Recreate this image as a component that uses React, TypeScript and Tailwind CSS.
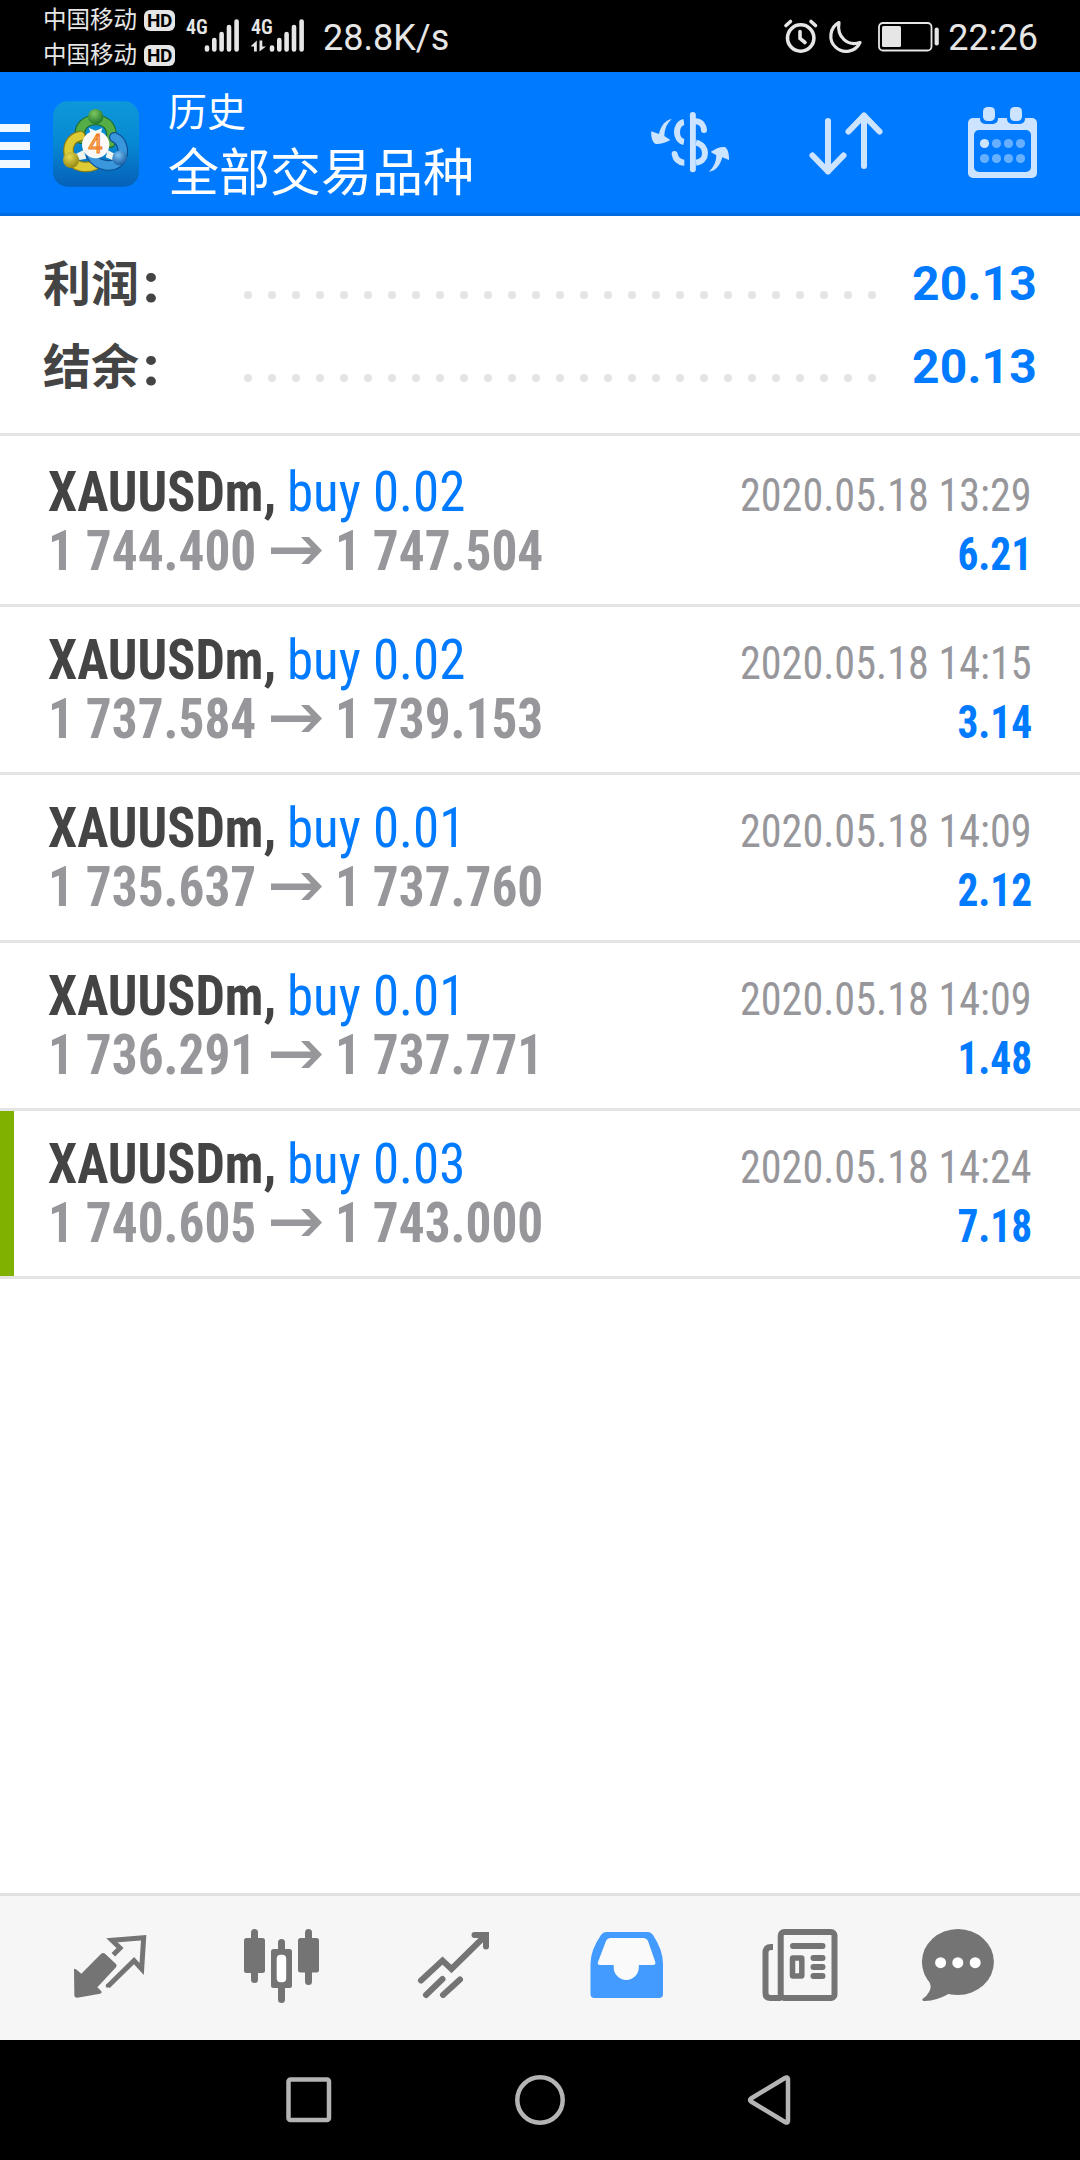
import React from 'react';

interface Deal {
  symbol: string;
  side: string;
  open: string;
  close: string;
  time: string;
  profit: string;
  marked?: boolean;
}

const deals: Deal[] = [
  { symbol: 'XAUUSDm,', side: 'buy 0.02', open: '1 744.400', close: '1 747.504', time: '2020.05.18 13:29', profit: '6.21' },
  { symbol: 'XAUUSDm,', side: 'buy 0.02', open: '1 737.584', close: '1 739.153', time: '2020.05.18 14:15', profit: '3.14' },
  { symbol: 'XAUUSDm,', side: 'buy 0.01', open: '1 735.637', close: '1 737.760', time: '2020.05.18 14:09', profit: '2.12' },
  { symbol: 'XAUUSDm,', side: 'buy 0.01', open: '1 736.291', close: '1 737.771', time: '2020.05.18 14:09', profit: '1.48' },
  { symbol: 'XAUUSDm,', side: 'buy 0.03', open: '1 740.605', close: '1 743.000', time: '2020.05.18 14:24', profit: '7.18', marked: true },
];

const Carrier = () => (
  <div className="flex items-center h-[35px]">
    <span className="w-[101px] text-[23.5px] leading-[35px] whitespace-nowrap">中国移动</span>
    <span className="w-[31px] h-[21px] rounded-[6px] bg-[#e6e6e6] text-black text-[19px] leading-[21px] tracking-[-0.5px] font-bold text-center font-['Roboto',sans-serif]">HD</span>
  </div>
);

const Signal = ({ data }: { data?: boolean }) => (
  <div className="relative w-[65px] h-[72px]">
    <span className="absolute left-0 top-[17px] text-[20px] leading-[20px] font-semibold font-['Roboto_Condensed',sans-serif]">4G</span>
    <svg className="w-[65px] h-[72px]" viewBox="0 0 65 72" stroke="#e6e6e6" strokeWidth="4.6" strokeLinecap="round" fill="none">
      <path d="M21 47.5V49.5M28.3 40V49.5M35.6 34V49.5M43 27V49.5M50.6 21.5V49.5" />
      {data && (
        <path d="M5.8 40.5V51.5H3V46.5H-0.5ZM8.5 40.5V51.5L15 46.5H11.3V40.5Z" fill="#e6e6e6" stroke="none" />
      )}
    </svg>
  </div>
);

const StatusBar = () => (
  <div className="flex h-[72px] bg-black text-[#e6e6e6] pl-[43px] pr-[42px] font-['Roboto','Noto_Sans_CJK_SC',sans-serif]">
    <div className="flex flex-col pt-[3px] w-[143px]">
      <Carrier />
      <Carrier />
    </div>
    <Signal />
    <Signal data />
    <span className="ml-[7px] text-[36px] leading-[76px]">28.8K/s</span>
    <svg className="ml-auto w-[168px] h-[72px]" viewBox="780 0 168 72" fill="none" stroke="#e6e6e6" strokeLinecap="round">
      {/* alarm */}
      <circle cx="800.7" cy="38" r="13.2" strokeWidth="3.6" />
      <path d="M800 31.5V38.5L805 42.5" strokeWidth="3.6" />
      <path d="M786 25.5L790.5 21.5M815.5 25.5L811 21.5" strokeWidth="3.6" />
      {/* do not disturb */}
      <path d="M839 22.5A15.3 15.3 0 1 0 860 42.5C848 46.5 836.5 37.5 839 22.5Z" strokeWidth="3.2" strokeLinejoin="round" />
      {/* battery */}
      <rect x="879" y="23" width="52.5" height="27.5" rx="4" strokeWidth="1.8" />
      <rect x="882" y="26" width="19" height="21" rx="1.5" fill="#e6e6e6" stroke="none" />
      <path d="M936.7 29.5V43.5" strokeWidth="4.2" />
    </svg>
    <span className="text-[36px] leading-[76px]">22:26</span>
  </div>
);

const AppLogo = () => (
  <svg className="ml-[23px] mt-[3px] w-[86px] h-[86px]" viewBox="24 35 258 258">
    <defs>
      <linearGradient id="tile" x1="0" y1="0" x2="0" y2="1">
        <stop offset="0" stopColor="#0d98da" />
        <stop offset="0.5" stopColor="#0788d2" />
        <stop offset="1" stopColor="#0560b8" />
      </linearGradient>
      <radialGradient id="green" cx="0.4" cy="0.3" r="0.8">
        <stop offset="0" stopColor="#7cc860" />
        <stop offset="1" stopColor="#136a22" />
      </radialGradient>
      <radialGradient id="yellow" cx="0.4" cy="0.3" r="0.8">
        <stop offset="0" stopColor="#e6da50" />
        <stop offset="1" stopColor="#8a7d0c" />
      </radialGradient>
      <radialGradient id="blue" cx="0.4" cy="0.3" r="0.8">
        <stop offset="0" stopColor="#7cc4f4" />
        <stop offset="1" stopColor="#0a4f9a" />
      </radialGradient>
    </defs>
    <rect x="24" y="36" width="258" height="256" rx="44" fill="url(#tile)" />
    <g fill="none" strokeLinecap="round">
      <path d="M108 148C96 112 122 92 152 92C190 92 208 122 196 160" stroke="#1c6a2c" strokeWidth="32" />
      <path d="M108 148C96 112 122 92 152 92C190 92 208 122 196 160" stroke="#55ad45" strokeWidth="25" />
      <path d="M106 140C76 146 64 172 74 206C86 232 122 238 148 228" stroke="#8a7d12" strokeWidth="32" />
      <path d="M106 140C76 146 64 172 74 206C86 232 122 238 148 228" stroke="#dccb34" strokeWidth="25" />
      <path d="M208 144C234 156 240 188 226 212C206 238 158 232 140 200" stroke="#0c4f94" strokeWidth="32" />
      <path d="M208 144C234 156 240 188 226 212C206 238 158 232 140 200" stroke="#3b97dc" strokeWidth="25" />
    </g>
    <path d="M132 116L152 124L172 116L166 136H138ZM92 194L116 182L124 208L104 212ZM210 194L188 182L182 204L202 212Z" fill="#eef4ee" />
    <circle cx="152" cy="82" r="23" fill="url(#green)" />
    <circle cx="78" cy="212" r="24" fill="url(#yellow)" />
    <circle cx="224" cy="206" r="22" fill="url(#blue)" />
    <circle cx="152" cy="166" r="41" fill="#fbfaf7" />
    <text x="151" y="192" textAnchor="middle" fontSize="76" fontFamily="Roboto, sans-serif" fontWeight="400" fill="#fbb36a" stroke="#ee7b1d" strokeWidth="3">4</text>
  </svg>
);

const Header = () => (
  <header className="flex items-center h-[144px] bg-[#007aff] border-b-[3px] border-[#006be0]">
    <div className="flex flex-col gap-[10px] w-[30px] pt-[7px]">
      <span className="h-2 bg-[#f2f8ff]" />
      <span className="h-2 bg-[#f2f8ff]" />
      <span className="h-2 bg-[#f2f8ff]" />
    </div>
    <AppLogo />
    <div className="flex flex-col ml-[29px] pb-[6px] text-white whitespace-nowrap font-['Noto_Sans_CJK_SC',sans-serif]">
      <span className="text-[39px] leading-[58px]">历史</span>
      <span className="text-[51px] leading-[62px]">全部交易品种</span>
    </div>
    <div className="flex ml-auto h-[141px]">
      {/* currency exchange */}
      <svg className="w-[156px] h-[141px]" viewBox="-84 -84 468 423" fill="#cce4ff">
        <g fill="none" stroke="#cce4ff" strokeWidth="18">
          <path d="M132 66C104 72 104 120 132 126" />
          <path d="M168 64C184 66 192 78 192 90" strokeLinecap="round" />
          <path d="M168 128C204 136 204 184 168 188" />
          <path d="M104 162C106 176 116 186 132 188" strokeLinecap="round" />
          <path d="M158.5 45V208" strokeLinecap="round" />
        </g>
        <rect x="133" y="50" width="16" height="160" fill="#007aff" />
        <path d="M95 57C78 60 62 76 57 102L34 94C32 112 38 128 47 132C60 133 76 128 91 120L73 108C74 84 82 70 95 57Z" />
        <path d="M206 215C226 214 240 198 247 172L267 180C268 160 262 144 254 141C240 140 226 146 212 156L229 166C228 188 220 204 206 215Z" />
      </svg>
      {/* sort */}
      <svg className="w-[156px] h-[141px]" viewBox="768 72 156 141" fill="none" stroke="#cce4ff" strokeWidth="6" strokeLinecap="round" strokeLinejoin="round">
        <path d="M828 121V171.5M812.5 155.5L828 171.5L843.5 155.5" />
        <path d="M864 166V115.5M848.5 131.5L864 115.5L879.5 131.5" />
      </svg>
      {/* calendar */}
      <svg className="w-[156px] h-[141px]" viewBox="924 72 156 141" fill="#cce4ff">
        <rect x="968" y="118" width="69" height="60" rx="5" />
        <rect x="974" y="130" width="57" height="42" rx="5" fill="#007aff" />
        <path d="M980 117H998V119A5 5 0 0 1 993 124H985A5 5 0 0 1 980 119ZM1007 117H1025V119A5 5 0 0 1 1020 124H1012A5 5 0 0 1 1007 119Z" fill="#007aff" />
        <rect x="983" y="107" width="12" height="14" rx="4.5" />
        <rect x="1010" y="107" width="12" height="14" rx="4.5" />
        <circle cx="984.5" cy="143.5" r="4.6" />
        <g fill="#66b0ff">
          <circle cx="996.5" cy="143.5" r="4.6" />
          <circle cx="1008.5" cy="143.5" r="4.6" />
          <circle cx="1020.5" cy="143.5" r="4.6" />
          <circle cx="984.5" cy="158.5" r="4.6" />
          <circle cx="996.5" cy="158.5" r="4.6" />
          <circle cx="1008.5" cy="158.5" r="4.6" />
          <circle cx="1020.5" cy="158.5" r="4.6" />
        </g>
      </svg>
    </div>
  </header>
);

const SummaryRow = ({ label, value }: { label: string; value: string }) => (
  <div className="flex items-center h-[83px] pl-[43px] pr-[43px] text-[48px] leading-[83px] font-bold">
    <div className="flex w-[201px] text-[#444] pb-[4px]">
      <span className="font-['Noto_Sans_CJK_SC',sans-serif]">{label}</span>
      <span className="ml-[4px] pt-[3px] text-[54px] font-black font-['Roboto',sans-serif]">:</span>
    </div>
    <div className="flex justify-between w-[632px] pt-[22px]">
      {Array.from({ length: 27 }, (_, i) => (
        <span key={i} className="size-2 rounded-full bg-[#e4e4e4]" />
      ))}
    </div>
    <span className="ml-auto text-[#007aff] tracking-[0.2px] font-['Roboto',sans-serif]">{value}</span>
  </div>
);

const DealRow = ({ deal }: { deal: Deal }) => (
  <div className="flex h-[168px] border-b-[3px] border-[#e4e4e4]">
    <span className={`w-[14px] shrink-0 ${deal.marked ? 'bg-[#80b100]' : ''}`} />
    <div className="flex flex-col flex-1 pt-6 pl-[34px] pr-[48px] leading-[59px] whitespace-nowrap font-['Roboto_Condensed',sans-serif]">
      <div className="flex items-baseline h-[59px] text-[55px]">
        <span className="w-[239px] font-bold text-[#444] origin-left scale-x-[0.947]">{deal.symbol}</span>
        <span className="text-[#007aff] origin-left scale-x-[0.963]">{deal.side}</span>
        <span className="ml-auto text-[45.5px] text-[#97979b] origin-right scale-x-[0.927]">{deal.time}</span>
      </div>
      <div className="flex items-baseline h-[59px] text-[55px] font-bold text-[#97979b]">
        <span className="w-[223px] origin-left scale-x-[0.933]">{deal.open}</span>
        <svg className="w-[51px] h-[28px] self-center translate-y-[-1px]" viewBox="0 0 51 28">
          <path d="M0 10.5H40L30 0H38L51 13.5L38 27H30L40 17H0Z" fill="#97979b" />
        </svg>
        <span className="ml-[13px] origin-left scale-x-[0.933]">{deal.close}</span>
        <span className="ml-auto text-[45.5px] text-[#007aff] origin-right scale-x-[0.91]">{deal.profit}</span>
      </div>
    </div>
  </div>
);

const TabBar = () => (
  <nav className="flex h-[147px] bg-[#f6f6f6] border-t-[3px] border-[#e1e1e1] pl-6 text-[#747474]">
    {/* quotes */}
    <svg className="w-[172px] h-[144px] shrink-0" viewBox="-108 -42 516 432" fill="currentColor">
      <path d="M42 180Q42 174 48 178L64 191L122 133Q129 126 136 132L168 162Q172 167 168 172L112 232L124 244Q127 249 120 251L52 263Q43 264 43 256Z" />
      <path d="M160 134L180 114L156 91L251 83L245 177L222 152L144 229" fill="none" stroke="currentColor" strokeWidth="15" />
      <circle cx="143" cy="227" r="6" />
    </svg>
    {/* charts */}
    <svg className="w-[172px] h-[144px] shrink-0" viewBox="0 0 172 144" fill="currentColor">
      <rect x="48" y="42" width="21" height="35" rx="2.5" />
      <rect x="55" y="33" width="7" height="54" rx="3.5" />
      <rect x="75" y="53" width="21" height="39" rx="2.5" />
      <rect x="82" y="43" width="7" height="64" rx="3.5" />
      <rect x="80.7" y="58.7" width="9.5" height="27.6" rx="4" fill="#fff" />
      <rect x="102" y="42" width="21" height="34.5" rx="2.5" />
      <rect x="109" y="33" width="7" height="56" rx="3.5" />
    </svg>
    {/* trade */}
    <svg className="w-[172px] h-[144px] shrink-0" viewBox="0 0 172 144" fill="none" stroke="currentColor" strokeWidth="6" strokeLinecap="round">
      <path d="M53 84.5L74.5 64.5L83.5 73L117 40" />
      <path d="M106.5 39H118V50.5" />
      <path d="M58 99L74.5 83M75 99L92 83.5" />
    </svg>
    {/* history */}
    <svg className="w-[172px] h-[144px] shrink-0" viewBox="0 0 172 144">
      <path d="M66 36H108Q111 36 113 39Q123 54 123 68V98Q123 102 119 102H54.5Q50.5 102 50.5 98V68Q50.5 54 61 39Q63 36 66 36Z" fill="#439bff" />
      <path d="M70.5 42H103Q106.5 42 108 45L115.3 66Q116 69 113 69H98.8V71.5A12.55 12.55 0 0 1 73.7 71.5V69H60Q57 69 58 66L66 45Q67.5 42 70.5 42Z" fill="#fafafa" />
    </svg>
    {/* news */}
    <svg className="w-[172px] h-[144px] shrink-0" viewBox="0 0 172 144" fill="none" stroke="currentColor" strokeWidth="6">
      <rect x="68.7" y="36" width="53.8" height="66" rx="3.5" />
      <path d="M61 51H59Q53.5 51 53.5 57V97Q53.5 102 58.5 102H69" />
      <path d="M81 50H110.5M101.5 62H110.5M101.5 71H110.5M101.5 80H110.5" strokeLinecap="round" />
      <rect x="80.5" y="62" width="9.3" height="18" rx="0.5" strokeWidth="5.5" />
    </svg>
    {/* messages */}
    <svg className="w-[172px] h-[144px] shrink-0" viewBox="0 0 172 144" fill="currentColor">
      <ellipse cx="73.9" cy="66" rx="36" ry="33" />
      <path d="M43 82Q49 90 45 96Q43 100 38.5 103Q37.5 105 41 105Q53 104.5 64.5 98L70 92Z" />
      <g fill="#fff">
        <circle cx="56.6" cy="66.7" r="5.5" />
        <circle cx="73.8" cy="66.7" r="5.5" />
        <circle cx="91.2" cy="66.7" r="5.5" />
      </g>
    </svg>
  </nav>
);

const SystemNav = () => (
  <div className="flex justify-center gap-[181px] h-[120px] items-center bg-black">
    <svg className="w-[50px] h-[50px]" viewBox="0 0 50 50" fill="none" stroke="#b4b4b4" strokeWidth="4.5">
      <rect x="4.5" y="4.5" width="40.5" height="40.5" rx="2" />
    </svg>
    <svg className="w-[50px] h-[50px]" viewBox="0 0 50 50" fill="none" stroke="#b4b4b4" strokeWidth="4.5">
      <circle cx="25" cy="25" r="22.7" />
    </svg>
    <svg className="w-[50px] h-[50px]" viewBox="0 0 50 50" fill="none" stroke="#b4b4b4" strokeWidth="4.5" strokeLinejoin="round">
      <path d="M42 4Q41.5 1.5 39 3L5 23.5Q3 25 5 26.5L39 47Q41.5 48.5 42 46Z" />
    </svg>
  </div>
);

export default function App() {
  return (
    <div className="flex flex-col w-[1080px] h-[2160px] bg-white overflow-hidden">
      <StatusBar />
      <Header />
      <section className="h-[220px] pt-[26px] border-b-[3px] border-[#e4e4e4]">
        <SummaryRow label="利润" value="20.13" />
        <SummaryRow label="结余" value="20.13" />
      </section>
      <main className="flex-1 pt-[3px]">
        {deals.map((deal, i) => (
          <DealRow key={i} deal={deal} />
        ))}
      </main>
      <TabBar />
      <SystemNav />
    </div>
  );
}
